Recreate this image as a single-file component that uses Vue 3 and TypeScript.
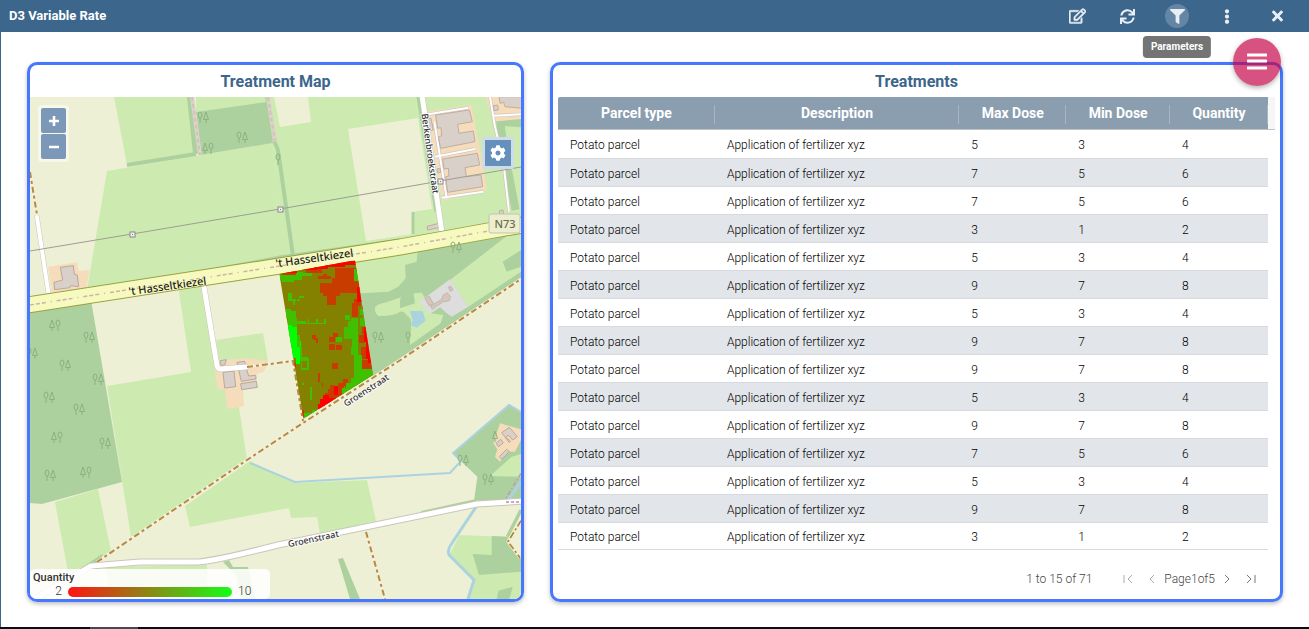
<script setup lang="ts">
import { ref } from 'vue'

interface Treatment {
  parcel: string
  description: string
  max: number
  min: number
  quantity: number
}

type Cell = [x: number, y: number, w: number, h: number]

const doses = [5, 7, 7, 3, 5, 9, 5, 9, 9, 5, 9, 7, 5, 9, 3]
const treatments: Treatment[] = doses.map((max) => ({
  parcel: 'Potato parcel',
  description: 'Application of fertilizer xyz',
  max,
  min: max - 2,
  quantity: max - 1,
}))

const columns = ['Parcel type', 'Description', 'Max Dose', 'Min Dose', 'Quantity']
const page = ref(1)

// Dose raster of the parcel, grouped by class
const raster: { color: string; cells: Cell[] }[] = [
  {
    color: '#c83c00',
    cells: [
      [180, 55, 65, 75], [135, 100, 118, 30], [145, 110, 50, 28], [155, 136, 28, 28], [130, 78, 38, 10],
      [143, 72, 14, 8], [208, 64, 30, 10], [170, 85, 14, 16], [232, 160, 18, 40], [238, 148, 20, 20],
      [112, 254, 10, 12], [116, 264, 14, 6], [124, 268, 5, 12], [174, 250, 15, 12], [162, 260, 18, 15],
      [162, 283, 17, 17], [184, 284, 17, 16], [170, 340, 18, 17], [129, 368, 5, 28], [92, 58, 50, 10],
      [20, 68, 60, 7], [262, 232, 12, 20], [252, 256, 14, 22], [258, 290, 18, 36], [262, 330, 30, 30],
      [204, 388, 16, 24], [190, 400, 30, 20], [160, 418, 50, 20], [164, 406, 14, 14], [150, 430, 50, 30],
      [78, 480, 10, 22], [57, 338, 6, 12], [140, 398, 5, 12], [246, 90, 12, 30],
    ],
  },
  {
    color: '#40c000',
    cells: [
      [15, 76, 66, 13], [20, 86, 36, 9], [80, 70, 32, 9], [64, 66, 20, 10], [236, 56, 14, 36],
      [38, 130, 12, 22], [38, 146, 24, 7], [54, 150, 5, 14], [72, 138, 16, 5], [66, 148, 8, 5],
      [34, 176, 14, 30], [46, 183, 16, 30], [40, 205, 26, 30], [64, 212, 30, 9], [94, 219, 58, 4],
      [98, 208, 4, 14], [124, 206, 4, 14], [148, 208, 4, 14], [64, 256, 12, 60], [74, 290, 8, 30],
      [76, 320, 24, 14], [78, 333, 4, 26], [97, 325, 4, 34], [78, 355, 22, 4], [210, 195, 16, 16],
      [228, 205, 22, 48], [220, 213, 30, 52], [208, 232, 34, 34], [184, 262, 17, 14], [230, 265, 18, 50],
      [228, 290, 22, 26], [236, 315, 26, 24], [238, 338, 18, 48], [246, 330, 15, 50], [256, 358, 40, 30],
      [228, 384, 55, 24], [214, 400, 40, 20], [200, 415, 40, 20], [106, 412, 4, 38], [82, 398, 4, 6],
      [254, 178, 14, 18], [256, 205, 14, 22], [86, 488, 30, 14], [110, 480, 24, 10], [206, 408, 5, 22],
    ],
  },
  {
    color: '#ff0000',
    cells: [
      [75, 52, 50, 9], [118, 46, 40, 12], [150, 40, 60, 11], [190, 34, 52, 12], [15, 64, 50, 6],
      [245, 112, 16, 44], [262, 156, 8, 22], [266, 232, 10, 44], [272, 260, 16, 66], [280, 326, 12, 14],
      [145, 436, 18, 40], [135, 448, 36, 30], [160, 444, 22, 20], [178, 408, 12, 26], [130, 462, 20, 16],
    ],
  },
  {
    color: '#00ff00',
    cells: [
      [38, 232, 28, 30], [44, 250, 22, 44], [50, 275, 16, 50], [56, 290, 19, 26], [62, 315, 14, 27],
      [40, 225, 12, 10], [74, 272, 5, 18],
    ],
  },
]

const trees: { x: number; y: number; kind: 'a' | 'b' }[] = [
  { x: 55, y: 325, kind: 'a' }, { x: 89, y: 337, kind: 'b' }, { x: 32, y: 353, kind: 'b' },
  { x: 65, y: 365, kind: 'b' }, { x: 98, y: 379, kind: 'b' }, { x: 49, y: 397, kind: 'b' },
  { x: 79, y: 409, kind: 'b' }, { x: 57, y: 437, kind: 'a' }, { x: 105, y: 443, kind: 'b' },
  { x: 50, y: 475, kind: 'b' }, { x: 86, y: 472, kind: 'a' }, { x: 203, y: 117, kind: 'b' },
  { x: 242, y: 137, kind: 'b' }, { x: 208, y: 148, kind: 'a' }, { x: 378, y: 337, kind: 'b' },
  { x: 456, y: 247, kind: 'b' }, { x: 463, y: 460, kind: 'b' }, { x: 488, y: 479, kind: 'b' },
]

const pylons = [[132, 234], [280, 209], [440, 181]]
</script>

<template>
  <div class="app">
    <header class="topbar">
      <h1 class="topbar-title">D3 Variable Rate</h1>
      <nav class="tools">
        <button class="tool" type="button" aria-label="Edit">
          <svg width="17" height="16" viewBox="0 0 576 512"><path stroke="#e9eef3" stroke-width="16" d="M402.3 344.9l32-32c5-5 13.7-1.5 13.7 5.7V464c0 26.5-21.5 48-48 48H48c-26.5 0-48-21.5-48-48V112c0-26.5 21.5-48 48-48h273.5c7.1 0 10.7 8.6 5.7 13.7l-32 32c-1.5 1.5-3.5 2.3-5.7 2.3H48v352h352V350.5c0-2.1.8-4.1 2.3-5.6zm156.6-201.8L296.3 405.7l-90.4 10c-26.2 2.9-48.5-19.2-45.6-45.6l10-90.4L432.9 17.1c22.9-22.9 59.9-22.9 82.7 0l43.2 43.2c22.9 22.9 22.9 60 .1 82.8zM460.1 174L402 115.9 216.2 301.8l-7.3 65.3 65.3-7.3L460.1 174zm64.8-79.7l-43.2-43.2c-4.1-4.1-10.8-4.1-14.8 0L436 82l58.1 58.1 30.9-30.9c4-4.2 4-10.8-.1-14.9z" /></svg>
        </button>
        <button class="tool" type="button" aria-label="Refresh">
          <svg width="15" height="15" viewBox="0 0 512 512"><path d="M440.65 12.57l4 82.77A247.16 247.16 0 0 0 255.83 8C134.73 8 33.91 94.92 12.29 209.82A12 12 0 0 0 24.09 224h49.05a12 12 0 0 0 11.67-9.26 175.91 175.91 0 0 1 317-56.94l-101.46-4.86a12 12 0 0 0-12.57 12v47.41a12 12 0 0 0 12 12H500a12 12 0 0 0 12-12V12a12 12 0 0 0-12-12h-47.37a12 12 0 0 0-11.98 12.57zM255.83 432a175.61 175.61 0 0 1-146-77.8l101.8 4.87a12 12 0 0 0 12.57-12v-47.4a12 12 0 0 0-12-12H12a12 12 0 0 0-12 12V500a12 12 0 0 0 12 12h47.35a12 12 0 0 0 12-12.6l-4.15-82.57A247.17 247.17 0 0 0 255.83 504c121.11 0 221.93-86.92 243.55-201.82a12 12 0 0 0-11.8-14.18h-49.05a12 12 0 0 0-11.67 9.26A175.86 175.86 0 0 1 255.83 432z" /></svg>
        </button>
        <button class="tool tool-active" type="button" aria-describedby="tip">
          <svg width="15" height="15" viewBox="0 0 512 512"><path d="M487.976 0H24.028C2.71 0-8.047 25.866 7.058 40.971L192 225.941V432c0 7.831 3.821 15.17 10.237 19.662l80 55.98C298.02 518.69 320 507.493 320 487.98V225.941l184.947-184.97C520.021 25.896 509.338 0 487.976 0z" /></svg>
          <span id="tip" class="tooltip" role="tooltip">Parameters</span>
        </button>
        <button class="tool" type="button" aria-label="More">
          <svg width="6" height="15" viewBox="0 0 192 512"><path d="M96 184c39.8 0 72 32.2 72 72s-32.2 72-72 72-72-32.2-72-72 32.2-72 72-72zM24 80c0 39.8 32.2 72 72 72s72-32.2 72-72S135.8 8 96 8 24 40.2 24 80zm0 352c0 39.8 32.2 72 72 72s72-32.2 72-72-32.2-72-72-72-72 32.2-72 72z" /></svg>
        </button>
        <button class="tool" type="button" aria-label="Close">
          <svg width="11" height="16" viewBox="0 0 352 512"><path d="M242.72 256l100.07-100.07c12.28-12.28 12.28-32.19 0-44.48l-22.24-22.24c-12.28-12.28-32.19-12.28-44.48 0L176 189.28 75.93 89.21c-12.28-12.28-32.19-12.28-44.48 0L9.21 111.45c-12.28 12.28-12.28 32.19 0 44.48L109.28 256 9.21 356.07c-12.28 12.28-12.28 32.19 0 44.48l22.24 22.24c12.28 12.28 32.2 12.28 44.48 0L176 322.72l100.07 100.07c12.28 12.28 32.2 12.28 44.48 0l22.24-22.24c12.28-12.28 12.28-32.19 0-44.48L242.72 256z" /></svg>
        </button>
      </nav>
    </header>

    <main class="board">
      <section class="panel">
        <h2 class="panel-title">Treatment Map</h2>
        <div class="map">
          <svg class="map-canvas" viewBox="30 97 491 502" preserveAspectRatio="xMidYMid slice">
            <defs>
              <clipPath id="parcel"><polygon points="13,72 240,31 294,375 85,506" /></clipPath>
              <g id="round" fill="none" stroke="#8cb080" stroke-width="1">
                <ellipse cx="0" cy="-2" rx="2" ry="3" /><path d="M0 1V6" />
              </g>
              <g id="conifer" fill="none" stroke="#8cb080" stroke-width="1">
                <path d="M0 -5L-2.5 2.5H2.5ZM0 2V6" />
              </g>
            </defs>

            <rect x="30" y="97" width="491" height="502" fill="#eef0d5" />

            <!-- fields -->
            <g fill="#cdebb0">
              <polygon points="114,97 192,97 197,154 127,165" />
              <polygon points="196,97 267,97 268,103 196,112" />
              <polygon points="107,171 273,143 281,262 86,296" />
              <polygon points="267,97 521,97 521,226 280,262 273,143" />
              <polygon points="178,285 203,283 219,368 228,400 239,407 247,460 131,537 107,386 191,372" />
              <polygon points="216,340 263,333 268,361 220,368" />
              <polygon points="55,502 98,489 111,551 95,563 68,572" />
              <polygon points="185,506 250,461 295,483 367,480 376,521 320,534 317,517 291,518 289,508 190,527" />
              <polygon points="105,567 207,565 208,599 112,599" />
            </g>
            <g fill="#eef0d5">
              <polygon points="274,97 308,97 311,122 280,127" />
              <polygon points="348,129 418,118 432,209 412,212 413,234 366,241" />
            </g>

            <!-- woods -->
            <g fill="#add19e">
              <polygon points="30,309 91,300 122,482 42,504 30,503" />
              <polygon points="196,112 267,102 273,143 201,155" />
              <polygon points="354,258 521,230 521,278 373,376" />
              <polygon points="223,562 229,560 233,567 248,567 255,599 241,599 236,575" />
              <polygon points="338,559 343,558 360,599 350,599" />
              <polygon points="421,511 476,499 477,502 421,513" />
              <polygon points="80,569 102,554 104,558 88,569" />
            </g>
            <g fill="none" stroke="#add19e">
              <path d="M127 165L196 154" stroke-width="4" />
              <path d="M190 97L196 154" stroke-width="6" />
              <path d="M267 97L275 143L278 150L293 256" stroke-width="4" />
              <path d="M418 97L436 212" stroke-width="3" />
              <path d="M413 212V234" stroke-width="3" />
              <path d="M86 294L280 257L400 240" stroke-width="3" />
            </g>

            <g transform="translate(275 250) scale(.33333)" fill="#cdebb0">
              <polygon points="240,35 428,5 425,35 390,45 392,85 370,110 340,125 258,130" />
              <path d="M300 172Q306 162 330 158L370 145L415 130L440 128L460 160L470 200L405 285L410 235L405 182L375 185Q360 198 310 198Q298 190 300 172Z" />
            </g>
            <g transform="translate(400 280) scale(.33333)">
              <polygon fill="#cdebb0" points="0,50 58,65 90,100 130,105 122,130 30,195 35,120 0,85" />
              <polygon fill="#cdebb0" points="150,0 363,-165 363,-90 308,-55 320,-25 363,-40 363,-25 205,80" />
              <polygon fill="#add19e" points="30,-50 45,70 0,85 0,60" />
              <polygon fill="#ddd" points="58,65 150,-2 205,80 155,110 140,100 120,82 90,102" />
              <g fill="#d4c6bc" stroke="#bda99c" stroke-width="2">
                <polygon points="75,55 87,48 100,70 88,78" />
                <polygon points="92,78 125,58 130,45 142,38 152,50 148,62 128,66 97,88" />
                <polygon points="145,22 152,18 159,30 151,34" />
              </g>
              <polygon fill="#aad3df" points="30,93 68,93 77,122 50,143 32,136 38,120" />
              <!-- farm in the south-east -->
              <polygon fill="#add19e" points="328,373 363,395 363,662 222,662 232,590 158,520" />
              <polygon fill="#cdebb0" points="335,530 363,522 363,590 270,588" />
              <polygon fill="#f5dcba" points="300,430 363,448 363,480 345,515 325,515 300,545 285,530 292,508 280,490" />
              <g fill="#d9d0c9" stroke="#b9a89c" stroke-width="3">
                <polygon points="305,458 328,442 352,470 338,480 325,465 318,472 332,484 328,488" />
                <polygon points="288,490 302,478 310,488 296,500" />
                <polygon points="298,530 320,508 328,515 305,538" />
              </g>
              <polygon fill="#cdebb0" points="178,765 363,772 363,957 205,957 222,900 148,825" />
              <polygon fill="#eef0d5" points="325,785 363,720 363,835" />
              <polygon fill="#add19e" points="275,768 322,770 330,795 363,838 363,875 237,885 218,822 275,825" />
              <polygon fill="#add19e" points="295,932 338,920 328,957 290,957" />
              <path d="M363 690L322 770" stroke="#add19e" stroke-width="10" />
              <path d="M363 722L324 785L360 833" stroke="#f4f0d8" stroke-width="9" fill="none" />
              <path d="M363 722L324 785L360 833" stroke="#b58530" stroke-width="5" stroke-dasharray="20 7 7 7" fill="none" />
              <path d="M363 605L325 660" stroke="#aad3df" stroke-width="9" />
              <path d="M363 580L318 655V668" stroke="#b9a0b4" stroke-width="5" stroke-dasharray="14 6 5 6" fill="none" />
            </g>

            <!-- water -->
            <g fill="none" stroke="#aad3df" stroke-width="2">
              <path d="M250 463L295 482L450 473L461 461L453 453L509 405L521 412" />
              <path d="M478 504L452 543Q446 552 450 556L474 580L468 599" stroke-width="3" />
              <path d="M480 506L515 503" stroke-width="2" />
            </g>

            <!-- built-up area in the north-east -->
            <g transform="translate(275 95) scale(.33333)">
              <path d="M745 85L675 80L690 180L722 345" stroke="#add19e" stroke-width="24" fill="none" />
              <polygon fill="#f5dcba" points="450,50 590,30 612,150 636,285 502,318" />
              <polygon fill="#f5dcba" points="632,5 740,5 740,72 655,80" />
              <g fill="none" stroke="#cfc6bd" stroke-width="10">
                <path d="M460 58L580 38M480 185L600 162M500 308L625 290M478 80L515 310M645 5L660 95L685 200L702 350M655 62L740 58" />
              </g>
              <g fill="none" stroke="#fff" stroke-width="6">
                <path d="M460 58L580 38M480 185L600 162M500 308L625 290M478 80L515 310M645 5L660 95L685 200L702 350M655 62L740 58" />
              </g>
              <g fill="#d9d0c9" stroke="#c0ada1" stroke-width="3">
                <polygon points="482,60 583,45 592,80 548,88 552,115 595,108 600,140 497,160 490,126 500,122 498,98 488,100" />
                <polygon points="503,192 607,175 614,210 570,218 574,245 618,240 623,275 518,292 512,245 522,243 520,220 507,222" />
                <polygon points="672,5 745,5 745,40 690,35 686,22 675,25" />
                <polygon points="655,32 668,30 670,45 657,47" />
                <polygon points="455,72 468,70 475,105 463,108" />
                <polygon points="486,222 495,220 497,232 488,234" />
                <polygon points="456,394 492,385 495,397 458,405" />
                <polygon points="673,347 684,345 686,360 675,362" />
              </g>
            </g>

            <!-- farm yards in the west -->
            <g transform="translate(28 95) scale(.33333)">
              <polygon fill="#f5dcba" points="60,515 147,502 152,528 185,525 175,580 72,592" />
              <polygon fill="#d9d0c9" stroke="#b9a89c" stroke-width="3" points="97,517 136,512 139,538 148,540 152,575 128,572 126,578 80,584 78,562 104,555" />
            </g>
            <g transform="translate(28 290) scale(.33333)">
              <polygon fill="#f5dcba" points="560,240 578,210 665,205 720,212 708,245 685,252 688,290 645,300 648,348 598,358 590,298 568,298" />
              <g fill="#d9d0c9" stroke="#b9a89c" stroke-width="3">
                <polygon points="585,247 618,243 623,290 590,294" />
                <polygon points="627,217 650,214 655,235 662,258 683,256 684,267 640,274 632,240" />
                <polygon points="638,281 685,274 688,292 641,299" />
                <polygon points="577,212 595,209 590,225 579,226" />
              </g>
            </g>

            <!-- minor roads -->
            <g fill="none" stroke="#c9c6bb" stroke-linejoin="round" stroke-linecap="round">
              <path d="M37 217L49 297" stroke-width="5" />
              <path d="M203 281L217 366Q218 369 221 369L246 367" stroke-width="6" />
              <path d="M422 95L442 233" stroke-width="6" />
              <path d="M38 597L91 566L140 562L198 562Q215 561 278 545L477 504L525 501" stroke-width="7" />
            </g>
            <g fill="none" stroke="#fff" stroke-linejoin="round" stroke-linecap="round">
              <path d="M37 217L49 297" stroke-width="4" />
              <path d="M203 281L217 366Q218 369 221 369L246 367" stroke-width="5" />
              <path d="M422 95L442 233" stroke-width="5" />
              <path d="M38 597L91 566L140 562L198 562Q215 561 278 545L477 504L525 501" stroke-width="5" />
            </g>
            <path d="M506 502H521" stroke="#c9a9c0" stroke-width="2" stroke-dasharray="3 2" />

            <!-- tracks -->
            <g fill="none" stroke="#ece4d8" stroke-width="3">
              <path d="M192 97L200 155M268 97L275 142" stroke="#d3d8cb" stroke-width="4" />
              <path d="M97 562L247 460L303 423L402 359L521 279M247 367L293 361L303 421M366 532L385 599M30 172L37 215" stroke="#f4f0da" />
            </g>
            <path d="M192 97L200 155M268 97L275 142" fill="none" stroke="#e5b9b5" stroke-width="2" stroke-dasharray="4 3" />
            <path d="M97 562L247 460L303 423L402 359L521 279M247 367L293 361L303 421M366 532L385 599M30 172L37 215" fill="none" stroke="#b58a42" stroke-width="2" stroke-dasharray="6 3 3 3" />

            <!-- primary road -->
            <g fill="none">
              <path d="M28 305L280 266L400 247L488 231L523 225" stroke="#9aa042" stroke-width="17" />
              <path d="M28 305L280 266L400 247L488 231L523 225" stroke="#f7fabf" stroke-width="15" />
              <path d="M30 305L280 266L400 247L488 231" stroke="#cdb4a4" stroke-width="1.5" stroke-dasharray="4 2 4 2 4 5 1 5" />
            </g>

            <use v-for="(t, i) in trees" :key="`l${i}`" :href="t.kind === 'a' ? '#conifer' : '#round'" :x="t.x - 3" :y="t.y" />
            <use v-for="(t, i) in trees" :key="`r${i}`" :href="t.kind === 'a' ? '#round' : '#conifer'" :x="t.x + 3" :y="t.y" />
            <use href="#conifer" x="495" y="436" />
            <use href="#round" x="278" y="159" />
            <use href="#round" x="408" y="337" />

            <!-- parcel raster -->
            <g transform="translate(275 250) scale(.33333)">
              <g clip-path="url(#parcel)" shape-rendering="crispEdges">
                <rect x="0" y="0" width="300" height="520" fill="#848000" />
                <g v-for="band in raster" :key="band.color" :fill="band.color">
                  <rect v-for="(c, i) in band.cells" :key="i" :x="c[0]" :y="c[1]" :width="c[2]" :height="c[3]" />
                </g>
              </g>
            </g>

            <!-- power line -->
            <path d="M30 251L132 234L280 209L440 181L521 167" fill="none" stroke="#9c9d95" stroke-width="1" />
            <g v-for="(p, i) in pylons" :key="`p${i}`">
              <rect :x="p[0] - 2" :y="p[1] - 2" width="5" height="5" fill="#f2f2f2" stroke="#888" />
              <rect :x="p[0]" :y="p[1]" width="1" height="1" fill="#777" />
            </g>

            <!-- labels -->
            <g class="map-label" text-anchor="middle">
              <text class="street-main" transform="translate(168 290) rotate(-8)">'t Hasseltkiezel</text>
              <text class="street-main" transform="translate(315 262) rotate(-8)">'t Hasseltkiezel</text>
              <text class="street" transform="translate(427 154) rotate(82)">Berkenbroekstraat</text>
              <text class="street" transform="translate(368 393) rotate(-33)">Groenstraat</text>
              <text class="street" transform="translate(314 542) rotate(-12)">Groenstraat</text>
              <rect x="489" y="214" width="31" height="19" rx="2" fill="#ecedd2" stroke="#c3c6a0" />
              <text class="shield" x="505" y="228">N73</text>
            </g>
          </svg>

          <div class="zoom">
            <button type="button" aria-label="Zoom in">
              <svg width="10" height="10" viewBox="0 0 10 10"><path d="M5 0V10M0 5H10" stroke="#fff" stroke-width="2.6" /></svg>
            </button>
            <button type="button" aria-label="Zoom out">
              <svg width="10" height="10" viewBox="0 0 10 10"><path d="M0 5H10" stroke="#fff" stroke-width="2.6" /></svg>
            </button>
          </div>
          <div class="settings">
            <button type="button" aria-label="Map settings">
              <svg width="16" height="16" viewBox="0 0 512 512"><path fill="#fff" d="M487.4 315.7l-42.6-24.6c4.3-23.2 4.3-47 0-70.2l42.6-24.6c4.9-2.8 7.1-8.6 5.5-14-11.1-35.6-30-67.8-54.7-94.6-3.8-4.1-10-5.1-14.8-2.3L380.8 110c-17.9-15.4-38.5-27.3-60.8-35.1V25.8c0-5.6-3.9-10.5-9.4-11.7-36.7-8.2-74.3-7.8-109.2 0-5.5 1.2-9.4 6.1-9.4 11.7V75c-22.2 7.9-42.8 19.8-60.8 35.1L88.7 85.5c-4.9-2.8-11-1.9-14.8 2.3-24.7 26.7-43.6 58.9-54.7 94.6-1.7 5.4.6 11.2 5.5 14L67.3 221c-4.3 23.2-4.3 47 0 70.2l-42.6 24.6c-4.9 2.8-7.1 8.6-5.5 14 11.1 35.6 30 67.8 54.7 94.6 3.8 4.1 10 5.1 14.8 2.3l42.6-24.6c17.9 15.4 38.5 27.3 60.8 35.1v49.2c0 5.6 3.9 10.5 9.4 11.7 36.7 8.2 74.3 7.8 109.2 0 5.5-1.2 9.4-6.1 9.4-11.7v-49.2c22.2-7.9 42.8-19.8 60.8-35.1l42.6 24.6c4.9 2.8 11 1.9 14.8-2.3 24.7-26.7 43.6-58.9 54.7-94.6 1.5-5.5-.7-11.3-5.6-14.1zM256 336c-44.1 0-80-35.9-80-80s35.9-80 80-80 80 35.9 80 80-35.9 80-80 80z" /></svg>
            </button>
          </div>
          <div class="legend">
            <div class="legend-title">Quantity</div>
            <div class="legend-scale">
              <span>2</span>
              <div class="legend-bar"></div>
              <span>10</span>
            </div>
          </div>
        </div>
      </section>

      <section class="panel">
        <h2 class="panel-title">Treatments</h2>
        <div class="grid">
          <table>
            <colgroup>
              <col class="c-parcel" /><col class="c-description" /><col class="c-max" /><col class="c-min" /><col class="c-quantity" />
            </colgroup>
            <thead>
              <tr><th v-for="c in columns" :key="c" scope="col">{{ c }}</th></tr>
            </thead>
            <tbody>
              <tr v-for="(t, i) in treatments" :key="i">
                <td>{{ t.parcel }}</td>
                <td>{{ t.description }}</td>
                <td>{{ t.max }}</td>
                <td>{{ t.min }}</td>
                <td>{{ t.quantity }}</td>
              </tr>
            </tbody>
          </table>
        </div>
        <footer class="pager">
          <span class="pager-summary">1 to 15 of 71</span>
          <button type="button" aria-label="First page" :disabled="page === 1" @click="page = 1">
            <svg width="10" height="10" viewBox="0 0 10 10"><path d="M1 1V9M9 1L5 5L9 9" /></svg>
          </button>
          <button type="button" aria-label="Previous page" :disabled="page === 1" @click="page--">
            <svg width="10" height="10" viewBox="0 0 10 10"><path d="M7 1L3 5L7 9" /></svg>
          </button>
          <span class="pager-page">Page{{ page }}of5</span>
          <button type="button" aria-label="Next page" :disabled="page === 5" @click="page++">
            <svg width="10" height="10" viewBox="0 0 10 10"><path d="M3 1L7 5L3 9" /></svg>
          </button>
          <button type="button" aria-label="Last page" :disabled="page === 5" @click="page = 5">
            <svg width="10" height="10" viewBox="0 0 10 10"><path d="M1 1L5 5L1 9M9 1V9" /></svg>
          </button>
        </footer>
      </section>
    </main>

    <button class="fab" type="button" aria-label="Menu">
      <svg width="20" height="18" viewBox="0 0 20 18"><path d="M1 2H19M1 8H19M1 15H19" stroke="#fff" stroke-width="3" stroke-linecap="round" /></svg>
    </button>
    <div class="taskbar"><i></i></div>
  </div>
</template>

<style>
body {
  margin: 0;
  background: #fff;
}
</style>

<style scoped>
.app {
  position: relative;
  box-sizing: border-box;
  min-height: 100vh;
  display: flex;
  flex-direction: column;
  font-family: Roboto, "Liberation Sans", sans-serif;
  font-size: 12px;
  color: #000;
}
button {
  border: 0;
  padding: 0;
  font: inherit;
  background: none;
  display: flex;
  align-items: center;
  justify-content: center;
}
.topbar {
  height: 32px;
  background: #3c668c;
  display: flex;
  align-items: center;
  justify-content: space-between;
  padding: 0 20px 0 9px;
}
.topbar-title {
  margin: 0;
  font-size: 13px;
  line-height: 16px;
  font-weight: 700;
  color: #fff;
}
.tools {
  display: flex;
  gap: 26px;
}
.tool {
  position: relative;
  width: 24px;
  height: 24px;
  border-radius: 50%;
  fill: #e9eef3;
}
.tool-active {
  background: #6585a4;
}
.tooltip {
  position: absolute;
  z-index: 3;
  top: 32px;
  left: 50%;
  transform: translateX(-50%);
  padding: 0 8px;
  border-radius: 4px;
  background: #747474;
  color: #fff;
  font-size: 10px;
  line-height: 22px;
  font-weight: 700;
}
.board {
  flex: 1;
  display: grid;
  grid-template-columns: 497fr 733fr;
  gap: 26px;
  padding: 30px 26px 25px;
  border-left: 1px solid #3c668c;
}
.panel {
  display: flex;
  flex-direction: column;
  min-width: 0;
  border: 3px solid #4677ff;
  border-radius: 10px;
  overflow: hidden;
  box-shadow: 0 2px 4px rgba(0, 0, 0, 0.25);
}
.panel-title {
  margin: 0;
  padding-top: 2px;
  text-align: center;
  font-size: 16px;
  line-height: 30px;
  font-weight: 700;
  color: #3c668c;
}
.map {
  position: relative;
  flex: 1;
}
.map-canvas {
  position: absolute;
  inset: 0;
  width: 100%;
  height: 100%;
}
.map-label text {
  font-family: "Noto Sans", sans-serif;
  font-weight: 500;
  paint-order: stroke;
  stroke-linejoin: round;
}
.map-label .street-main {
  font-size: 11px;
  fill: #222;
  stroke: #f7fabf;
  stroke-width: 1px;
}
.map-label .street {
  font-size: 9px;
  fill: #333;
  stroke: rgba(255, 255, 255, 0.8);
  stroke-width: 2px;
}
.map-label .shield {
  font-size: 11px;
  fill: #6b7040;
}
.zoom,
.settings {
  position: absolute;
  padding: 3px;
  border-radius: 4px;
  background: rgba(255, 255, 255, 0.5);
}
.zoom {
  left: 8px;
  top: 8px;
  display: grid;
  gap: 1px;
}
.zoom button {
  width: 25px;
  height: 25px;
  background: #7b98b8;
  border-radius: 2px;
}
.settings {
  top: 40px;
  right: 7px;
  background: #cfdbe8;
  border-radius: 2px;
}
.settings button {
  width: 26px;
  height: 26px;
  background: #6690bc;
}
.legend {
  position: absolute;
  left: 0;
  bottom: 0;
  box-sizing: border-box;
  width: 240px;
  height: 30px;
  padding: 2px 20px 0 3px;
  border-radius: 5px;
  background: rgba(255, 255, 255, 0.86);
  color: #333;
}
.legend-title {
  font-size: 11px;
  line-height: 13px;
  font-weight: 500;
}
.legend-scale {
  display: grid;
  grid-template-columns: 29px 1fr 12px;
  gap: 6px;
  align-items: center;
  line-height: 15px;
  font-weight: 300;
}
.legend-scale span:first-child {
  text-align: right;
}
.legend-bar {
  height: 10px;
  border-radius: 5px;
  background: linear-gradient(90deg, #ff1414, #14ff14);
}
.grid {
  margin: 0 5px;
  padding-right: 7px;
  background: linear-gradient(#f4f7f6 32px, #bdc3c7 32px) no-repeat top right / 7px 33px;
}
table {
  width: 100%;
  table-layout: fixed;
  border-collapse: separate;
  border-spacing: 0;
}
.c-parcel { width: 22.1%; }
.c-description { width: 34.4%; }
.c-max { width: 15.1%; }
.c-min { width: 14.6%; }
.c-quantity { width: 13.8%; }
th {
  position: relative;
  box-sizing: border-box;
  height: 33px;
  padding: 0;
  border-bottom: 1px solid #bdc3c7;
  background: #8a9eaf;
  color: #fff;
  font-size: 14px;
  line-height: 16px;
  font-weight: 700;
}
th:first-child {
  border-top-left-radius: 2px;
}
th::after {
  content: "";
  position: absolute;
  right: 0;
  top: 8px;
  width: 1px;
  height: 19px;
  background: #a9b6c1;
}
td {
  box-sizing: border-box;
  height: 28px;
  padding: 2px 12px 0;
  border-bottom: 1px solid #d6dadd;
  line-height: 16px;
  font-weight: 300;
}
tbody tr:first-child td {
  height: 29px;
}
tbody tr:last-child td {
  height: 27px;
}
tbody tr:nth-child(even) {
  background: #e2e6eb;
}
.pager {
  flex: 1;
  display: flex;
  align-items: center;
  justify-content: flex-end;
  padding: 8px 24px 0 0;
  min-height: 41px;
  box-sizing: border-box;
  color: #444;
  font-weight: 300;
}
.pager button {
  width: 10px;
  height: 16px;
  margin-right: 14px;
}
.pager button:last-child {
  margin-right: 0;
}
.pager svg {
  fill: none;
  stroke: #777;
}
.pager button:disabled svg {
  stroke: #aaa;
}
.pager-summary {
  margin-right: 31px;
}
.pager button:nth-of-type(2) {
  margin-right: 7px;
}
.pager-page {
  margin-right: 7px;
}
.fab {
  position: absolute;
  z-index: 2;
  top: 38px;
  right: 28px;
  width: 48px;
  height: 48px;
  border-radius: 50%;
  background: rgba(197, 0, 70, 0.68);
  box-shadow: 0 2px 5px rgba(0, 0, 0, 0.3);
}
.taskbar {
  height: 2px;
  padding-left: 90px;
  background: #0d0b14;
}
.taskbar i {
  display: block;
  width: 48px;
  height: 2px;
  background: #4a4650;
}
</style>
